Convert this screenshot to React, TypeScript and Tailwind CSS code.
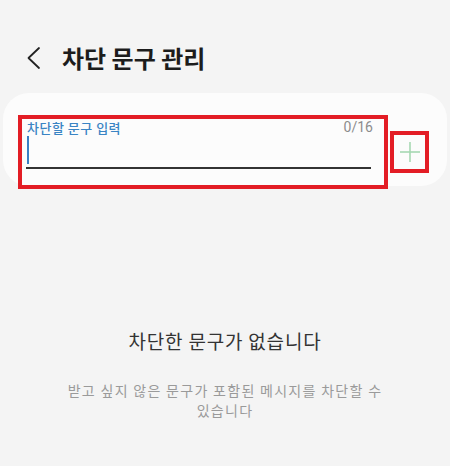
const font = { fontFamily: '"Noto Sans CJK KR", "Noto Sans", sans-serif' };

const BackIcon = () => (
  <svg width="14" height="24" viewBox="0 0 14 24" fill="none">
    <polyline points="12,2 1.5,12 12,22" stroke="#222" strokeWidth="1.8" strokeLinecap="round" strokeLinejoin="round" />
  </svg>
);

const PlusIcon = () => (
  <svg width="22" height="22" viewBox="0 0 22 22" fill="none">
    <line x1="11" y1="1" x2="11" y2="21" stroke="#a6d8b2" strokeWidth="1.6" />
    <line x1="1" y1="11" x2="21" y2="11" stroke="#a6d8b2" strokeWidth="1.6" />
  </svg>
);

export default function App() {
  return (
    <div className="w-[450px] h-[466px] bg-[#f4f4f4] overflow-hidden" style={font}>
      <div className="flex items-center h-[42px] mt-[37px] pl-[27px]">
        <BackIcon />
        <h1 className="ml-[21px] text-[24px] font-bold text-[#1c1c1c]">차단 문구 관리</h1>
      </div>

      <div className="mx-[3px] mt-[14px] h-[93px] rounded-[26px] bg-[#fcfcfc] pt-[22px] pl-[15px] flex items-start">
        <div className="w-[370px] h-[74px] border-4 border-[#e31d25] shrink-0">
          <div className="flex justify-between items-center h-[17px] pl-[5px] pr-[11px]">
            <span className="text-[13px] font-medium text-[#3a84c4] leading-[17px] tracking-[0.5px]">차단할 문구 입력</span>
            <span className="text-[14px] text-[#8c8c8c] leading-[17px]" style={{ fontFamily: "Roboto, sans-serif" }}>0/16</span>
          </div>
          <div className="ml-[5px] w-[2px] h-[28px] bg-[#3a7fc4]" />
          <div className="ml-[4px] mt-[3px] w-[345px] h-[2px] bg-[#333]" />
        </div>
        <div className="ml-[2px] mt-[16px] w-[39px] h-[42px] border-4 border-[#e31d25] flex items-center justify-center shrink-0">
          <PlusIcon />
        </div>
      </div>

      <div className="mt-[142px] flex flex-col items-center">
        <p className="text-[19px] leading-[26px] text-[#333] tracking-[0.8px]">차단한 문구가 없습니다</p>
        <p className="mt-[26px] w-[330px] text-center text-[14px] leading-[20px] text-[#9a9a9a] tracking-[1.3px]">
          받고 싶지 않은 문구가 포함된 메시지를 차단할 수 있습니다
        </p>
      </div>
    </div>
  );
}
